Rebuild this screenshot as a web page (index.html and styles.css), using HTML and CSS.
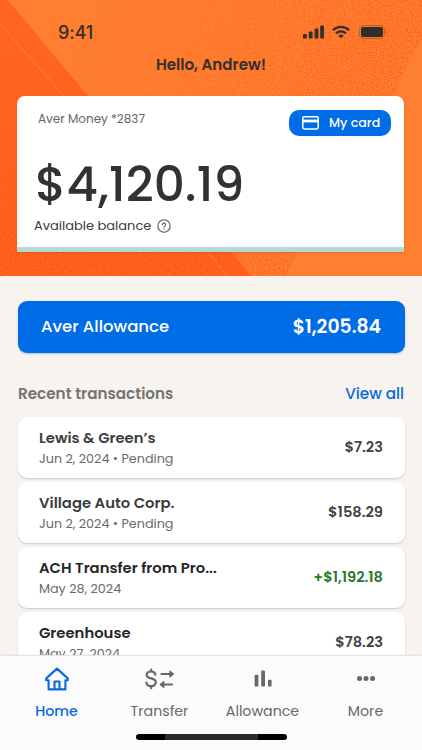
FILE: index.html
```html
<!DOCTYPE html>
<html lang="en">
<head>
<meta charset="utf-8">
<meta name="viewport" content="width=device-width, initial-scale=1">
<title>Aver Money</title>
<link rel="stylesheet" href="styles.css">
</head>
<body>
<div class="app">
  <header class="hero">
    <svg class="hero-art" viewBox="0 0 422 276" preserveAspectRatio="none" aria-hidden="true">
      <defs>
        <filter id="grain" x="0" y="0" width="100%" height="100%" color-interpolation-filters="sRGB">
          <feTurbulence type="fractalNoise" baseFrequency="0.72" numOctaves="2" seed="4"/>
          <feColorMatrix values="0 0 0 0 0.98  0 0 0 0 0.3  0 0 0 0 0.06  4 0 0 0 -1.75"/>
          <feComposite in2="SourceGraphic" operator="in"/>
        </filter>
        <linearGradient id="fade" gradientUnits="userSpaceOnUse" x1="90" y1="0" x2="390" y2="130">
          <stop offset="0" stop-color="#fff" stop-opacity=".06"/>
          <stop offset="1" stop-color="#fff" stop-opacity=".62"/>
        </linearGradient>
        <linearGradient id="fadeLow" x1="0" y1="0" x2="0" y2="1">
          <stop offset="0.2" stop-color="#fff" stop-opacity="0"/>
          <stop offset="1" stop-color="#fff" stop-opacity=".75"/>
        </linearGradient>
        <mask id="m1" maskUnits="userSpaceOnUse" x="0" y="0" width="422" height="276"><rect width="422" height="276" fill="url(#fade)"/></mask>
        <mask id="m2" maskUnits="userSpaceOnUse" x="0" y="0" width="422" height="276"><rect width="422" height="276" fill="url(#fadeLow)"/></mask>
      </defs>
      <rect width="422" height="276" fill="#ff7f30"/>
      <g mask="url(#m1)"><path d="M8 0H422V40Q406 62 394 96L298 252L286 276H251Z" fill="#000" filter="url(#grain)"/></g>
      <path d="M0 0H8L88 96L230 250L251 276H0Z" fill="#ff651f"/>
      <g mask="url(#m2)"><path d="M0 0H8L88 96L230 250L251 276H0Z" fill="#000" filter="url(#grain)"/></g>
      <path d="M0 24L63 95L208 252L227 276" fill="none" stroke="#ff8a35" stroke-width=".8"/>
    </svg>
    <div class="status">
      <span class="time">9:41</span>
      <span class="status-icons">
        <svg width="22" height="14" viewBox="0 0 22 14" fill="#352f2c"><rect x="0" y="9" width="3.8" height="4.6" rx="1.2"/><rect x="5.8" y="6.6" width="3.8" height="7" rx="1.2"/><rect x="11.6" y="3.6" width="3.8" height="10" rx="1.2"/><rect x="17.2" y="0.6" width="3.8" height="13" rx="1.2"/></svg>
        <svg class="wifi" width="18" height="14" viewBox="0 0 18 14" fill="none" stroke="#352f2c" stroke-width="2.3"><path d="M.9 5.1a11.8 11.8 0 0 1 16.2 0"/><path d="M4 8.3a7.4 7.4 0 0 1 10 0"/><path d="M9 13.3L6.3 10.7a4 4 0 0 1 5.4 0Z" fill="#352f2c" stroke="none"/></svg>
        <svg width="29" height="14" viewBox="0 0 29 14"><rect x=".5" y=".5" width="25" height="13" rx="4" fill="none" stroke="#b85f32"/><rect x="2" y="2" width="22" height="10" rx="2.6" fill="#302d2c"/><path d="M27 4.8q2 2.2 0 4.4Z" fill="#b85f32"/></svg>
      </span>
    </div>
    <h1 class="hello">Hello, Andrew!</h1>
    <section class="balance">
      <div class="balance-top">
        <span class="account">Aver Money *2837</span>
        <span class="my-card">
          <svg width="17" height="14" viewBox="0 0 17 14"><rect x=".8" y=".8" width="15.4" height="12.2" rx="1.4" fill="none" stroke="#fff" stroke-width="1.5"/><path d="M1 3.6H16V6.4H1Z" fill="#fff"/></svg>
          <span>My card</span>
        </span>
      </div>
      <div class="amount">$4,120.19</div>
      <div class="available"><span>Available balance</span>
        <svg width="14" height="14" viewBox="0 0 14 14" fill="none" stroke="#555" stroke-linecap="round"><circle cx="7" cy="7" r="6.2" stroke-width="1.1"/><path d="M5.4 5.6a1.6 1.6 0 1 1 2.5 1.3Q7 7.4 7 8.1" stroke-width="1.1"/><path d="M7 9.8v.1" stroke-width="1.2"/></svg>
      </div>
    </section>
  </header>

  <main class="content">
    <section class="allowance"><span class="allow-name">Aver Allowance</span><span class="allow-sum">$1,205.84</span></section>
    <div class="section-head"><h2>Recent transactions</h2><a class="view-all">View all</a></div>
    <ul class="list">
      <li class="item"><div><div class="name">Lewis &amp; Green’s</div><div class="date">Jun 2, 2024 • Pending</div></div><span class="sum">$7.23</span></li>
      <li class="item"><div><div class="name">Village Auto Corp.</div><div class="date">Jun 2, 2024 • Pending</div></div><span class="sum">$158.29</span></li>
      <li class="item"><div><div class="name dark">ACH Transfer from Pro...</div><div class="date">May 28, 2024</div></div><span class="sum credit">+$1,192.18</span></li>
      <li class="item"><div><div class="name dark">Greenhouse</div><div class="date">May 27, 2024</div></div><span class="sum">$78.23</span></li>
    </ul>
  </main>

  <nav class="tabs">
    <div class="tab-row">
      <div class="tab active">
        <svg width="26" height="26" viewBox="0 0 26 26" fill="none" stroke="#0b69dc" stroke-width="2.1" stroke-linecap="round" stroke-linejoin="round"><path d="M4.6 14.2H2.2V12.4L13 2.6L23.8 12.4V14.2H21.4V23.4H4.6Z"/><path d="M10.5 23V15.5H15.5V23"/></svg>
        <span>Home</span>
      </div>
      <div class="tab">
        <svg width="30" height="26" viewBox="0 0 30 26" fill="none" stroke="#686868" stroke-width="2.2" stroke-linecap="round" stroke-linejoin="round"><path d="M10.4 8.7C10 6.7 8.4 5.5 6.2 5.5C3.6 5.5 1.7 6.8 1.7 9C1.7 13.6 10.8 11.2 10.8 16.1C10.8 18.6 8.8 20.2 6.2 20.2C3.5 20.2 1.6 18.9 1.4 16.5M6.2 3.5V5.5M6.2 20.2V22.2"/><path d="M16.5 8H27.5"/><path d="M25 5.2L28.2 8L25 10.8Z" fill="#686868" stroke-width="1.4"/><path d="M27 18.5H16"/><path d="M18.7 15.7L15.5 18.5L18.7 21.3Z" fill="#686868" stroke-width="1.4"/></svg>
        <span>Transfer</span>
      </div>
      <div class="tab">
        <svg width="26" height="26" viewBox="0 0 26 26" fill="#686868"><rect x="4.6" y="8.8" width="3.8" height="11.7" rx="1"/><rect x="11.2" y="4.5" width="3.8" height="16" rx="1"/><rect x="18" y="13.7" width="3.6" height="6.8" rx="1"/></svg>
        <span>Allowance</span>
      </div>
      <div class="tab">
        <svg width="26" height="26" viewBox="0 0 26 26" fill="#686868"><circle cx="6.5" cy="12.5" r="2.5"/><circle cx="13" cy="12.5" r="2.5"/><circle cx="19.5" cy="12.5" r="2.5"/></svg>
        <span>More</span>
      </div>
    </div>
    <div class="home-bar"></div>
  </nav>
</div>
</body>
</html>
```
FILE: styles.css
```css
* { box-sizing: border-box; }
body { margin: 0; font-family: Poppins, Inter, "Liberation Sans", sans-serif; color: #303234; background: #f7f4f0; }
svg { display: block; flex: none; }
.app { width: 422px; height: 750px; display: flex; flex-direction: column; overflow: hidden; }
.hero { position: relative; isolation: isolate; height: 276px; flex: none; padding: 0 18px 0 17px; }
.hero-art { position: absolute; inset: 0; width: 100%; height: 100%; z-index: -1; }
.status { height: 53px; padding: 11px 16px 0 41px; display: flex; align-items: center; justify-content: space-between; color: #352f2c; }
.time { font-family: Inter, "Liberation Sans", sans-serif; font-size: 18px; font-weight: 500; letter-spacing: -.1px; }
.status-icons { display: flex; align-items: center; }
.wifi { margin: 0 9px 0 7px; }
.hello { margin: 0; height: 43px; line-height: 24px; font-size: 15.1px; font-weight: 600; text-align: center; color: #352f2c; padding-left: 1px; }
.balance { height: 156px; background: #fff; border-radius: 8px 8px 0 0; border-bottom: 5px solid #b4d9d5; padding: 14px 13px 0 17px; box-shadow: 0 1px 2px #a83c1050; }
.balance-top { display: flex; justify-content: space-between; }
.account { margin-left: 4px; font-size: 12px; line-height: 18px; color: #666; }
.my-card { width: 102px; height: 26px; border-radius: 10px; background: #006ce5; color: #fff; display: flex; align-items: center; padding-left: 13px; gap: 10px; font-size: 12.6px; font-weight: 500; }
.amount { margin-top: 18px; margin-left: 1px; height: 60px; line-height: 60px; font-size: 48.5px; font-weight: 500; white-space: nowrap; }
.available { margin-top: 2px; height: 20px; line-height: 18px; display: flex; align-items: center; gap: 6px; font-size: 13px; color: #3b3b3b; }
.content { flex: 1; min-height: 0; overflow: hidden; padding: 25px 17px 0 18px; }
.allowance { height: 52px; border-radius: 9px; background: #006ce5; color: #fff; display: flex; align-items: center; justify-content: space-between; padding: 0 24px 2px 23px; box-shadow: 0 1px 2px #0b4c9150; }
.allow-name { font-size: 16.5px; font-weight: 500; }
.allow-sum { font-size: 18.8px; font-weight: 600; }
.section-head { margin-top: 28px; height: 24px; display: flex; align-items: center; justify-content: space-between; }
h2 { margin: 0; font-size: 15.2px; font-weight: 600; color: #777370; }
.view-all { font-size: 15.2px; font-weight: 500; color: #0b69dc; margin-right: 1px; }
.list { list-style: none; margin: 12px 0 0; padding: 0; display: flex; flex-direction: column; gap: 4px; }
.item { height: 61px; flex: none; background: #fff; border-radius: 9px; box-shadow: 0 1px 2px #0000002e; display: flex; align-items: center; justify-content: space-between; padding: 0 22px 0 21px; }
.name { font-size: 14.8px; line-height: 21px; font-weight: 600; color: #3a3d3f; white-space: nowrap; }
.dark { color: #242628; }
.date { font-size: 12.75px; line-height: 21px; color: #696969; white-space: nowrap; }
.sum { font-size: 14.6px; font-weight: 600; color: #414345; }
.credit { color: #277a2b; }
.tabs { position: relative; height: 95px; flex: none; background: #fcfbfc; border-top: 1px solid #e5e3e2; box-shadow: 0 0 2px #00000018; display: flex; flex-direction: column; align-items: center; }
.tab-row { height: 78px; width: 412px; display: grid; grid-template-columns: repeat(4, 103px); }
.tab { display: flex; flex-direction: column; align-items: center; padding-top: 10px; gap: 9px; font-size: 14.2px; line-height: 20px; color: #686868; }
.active { color: #0b69dc; font-weight: 500; }
.home-bar { width: 151px; height: 6px; border-radius: 3px; background: linear-gradient(90deg, #000 19%, #2b2b2b 19% 81%, #000 81%); }
```
